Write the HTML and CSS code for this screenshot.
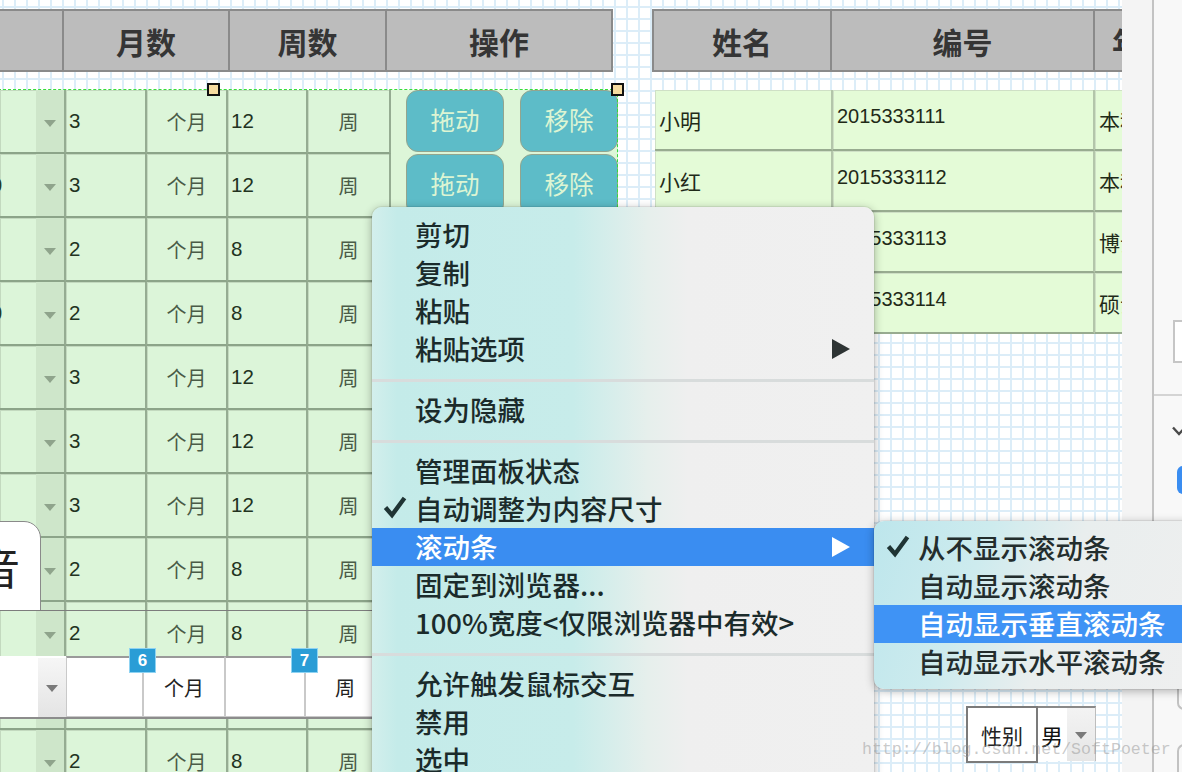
FILE: index.html
```html
<!DOCTYPE html>
<html lang="zh-CN">
<head>
<meta charset="utf-8">
<title>Axure</title>
<link rel="stylesheet" href="styles.css">
</head>
<body>
<div class="app">
  <div class="canvas">
    <div class="thead lhead">
      <div></div><div>月数</div><div>周数</div><div>操作</div>
    </div>
    <div class="thead rhead">
      <div>姓名</div><div>编号</div><div>年级</div>
    </div>

    <div class="ltable">
      <div class="lrow"><div class="c ca"><i class="strip"><b class="arr"></b></i></div><div class="c num">3</div><div class="c unit">个月</div><div class="c num">12</div><div class="c unit">周</div><div class="ops"><span class="btn">拖动</span><span class="btn">移除</span></div></div>
      <div class="lrow"><div class="c ca"><span class="cut">0</span><i class="strip"><b class="arr"></b></i></div><div class="c num">3</div><div class="c unit">个月</div><div class="c num">12</div><div class="c unit">周</div><div class="ops"><span class="btn">拖动</span><span class="btn">移除</span></div></div>
      <div class="lrow"><div class="c ca"><i class="strip"><b class="arr"></b></i></div><div class="c num">2</div><div class="c unit">个月</div><div class="c num">8</div><div class="c unit">周</div><div class="ops"><span class="btn"></span><span class="btn"></span></div></div>
      <div class="lrow"><div class="c ca"><span class="cut">0</span><i class="strip"><b class="arr"></b></i></div><div class="c num">2</div><div class="c unit">个月</div><div class="c num">8</div><div class="c unit">周</div><div class="ops"><span class="btn"></span><span class="btn"></span></div></div>
      <div class="lrow"><div class="c ca"><i class="strip"><b class="arr"></b></i></div><div class="c num">3</div><div class="c unit">个月</div><div class="c num">12</div><div class="c unit">周</div><div class="ops"><span class="btn"></span><span class="btn"></span></div></div>
      <div class="lrow"><div class="c ca"><i class="strip"><b class="arr"></b></i></div><div class="c num">3</div><div class="c unit">个月</div><div class="c num">12</div><div class="c unit">周</div><div class="ops"><span class="btn"></span><span class="btn"></span></div></div>
      <div class="lrow"><div class="c ca"><i class="strip"><b class="arr"></b></i></div><div class="c num">3</div><div class="c unit">个月</div><div class="c num">12</div><div class="c unit">周</div><div class="ops"><span class="btn"></span><span class="btn"></span></div></div>
      <div class="lrow"><div class="c ca"><i class="strip"><b class="arr"></b></i></div><div class="c num">2</div><div class="c unit">个月</div><div class="c num">8</div><div class="c unit">周</div><div class="ops"><span class="btn"></span><span class="btn"></span></div></div>
      <div class="lrow"><div class="c ca"><i class="strip"><b class="arr"></b></i></div><div class="c num">2</div><div class="c unit">个月</div><div class="c num">8</div><div class="c unit">周</div><div class="ops"><span class="btn"></span><span class="btn"></span></div></div>
      <div class="lrow"><div class="c ca"><i class="strip"><b class="arr"></b></i></div><div class="c num"></div><div class="c unit"></div><div class="c num"></div><div class="c unit"></div><div class="ops"><span class="btn"></span><span class="btn"></span></div></div>
      <div class="lrow"><div class="c ca"><i class="strip"><b class="arr"></b></i></div><div class="c num">2</div><div class="c unit">个月</div><div class="c num">8</div><div class="c unit">周</div><div class="ops"><span class="btn"></span><span class="btn"></span></div></div>
    </div>

    <div class="selbox"></div>
    <span class="handle h1"></span>
    <span class="handle h2"></span>

    <div class="rtable">
      <div class="rrow"><div class="rc">小明</div><div class="rc id">2015333111</div><div class="rc">本科</div></div>
      <div class="rrow"><div class="rc">小红</div><div class="rc id">2015333112</div><div class="rc">本科</div></div>
      <div class="rrow"><div class="rc"></div><div class="rc id">2015333113</div><div class="rc">博士</div></div>
      <div class="rrow"><div class="rc"></div><div class="rc id">2015333114</div><div class="rc">硕士</div></div>
    </div>

    <div class="tab">音</div>
    <div class="hline"></div>

    <div class="wrow">
      <div class="wc wa"><i class="wstrip"><b class="warr"></b></i></div>
      <div class="wc"></div>
      <div class="wc wu">个月</div>
      <div class="wc"></div>
      <div class="wc wu">周</div>
    </div>
    <span class="badge b6">6</span>
    <span class="badge b7">7</span>

    <div class="field">
      <div class="flabel">性别</div>
      <div class="fsel"><span>男</span><i class="fstrip"><b class="warr"></b></i></div>
    </div>
  </div>

  <div class="panel">
    <div class="pgut"></div>
    <div class="pdiv"></div>
    <div class="pside">
      <div class="pbox"></div>
      <div class="pline"></div>
      <svg class="pchev" width="14" height="10" viewBox="0 0 14 10"><polyline points="1,1.5 7,8 13,1.5" fill="none" stroke="#4a4a4a" stroke-width="2.4"/></svg>
      <div class="pblue"></div>
      <div class="pround"></div>
      <div class="pround p2"></div>
    </div>
  </div>

  <div class="menu">
    <div class="mi">剪切</div>
    <div class="mi">复制</div>
    <div class="mi">粘贴</div>
    <div class="mi">粘贴选项<svg class="subarr" width="18" height="20" viewBox="0 0 18 20"><polygon points="0,0 18,10 0,20" fill="#2e3434"/></svg></div>
    <div class="sep"></div>
    <div class="mi">设为隐藏</div>
    <div class="sep"></div>
    <div class="mi">管理面板状态</div>
    <div class="mi"><svg class="chk" width="24" height="24" viewBox="0 0 24 24"><polyline points="2.5,12.5 9,20 21.5,3" fill="none" stroke="#1f3434" stroke-width="4.4"/></svg>自动调整为内容尺寸</div>
    <div class="mi hl">滚动条<svg class="subarr" width="18" height="20" viewBox="0 0 18 20"><polygon points="0,0 18,10 0,20" fill="#ffffff"/></svg></div>
    <div class="mi">固定到浏览器...</div>
    <div class="mi">100%宽度&lt;仅限浏览器中有效&gt;</div>
    <div class="sep"></div>
    <div class="mi">允许触发鼠标交互</div>
    <div class="mi">禁用</div>
    <div class="mi">选中</div>
  </div>

  <div class="submenu">
    <div class="mi"><svg class="chk" width="24" height="24" viewBox="0 0 24 24"><polyline points="2.5,12.5 9,20 21.5,3" fill="none" stroke="#1f3434" stroke-width="4.4"/></svg>从不显示滚动条</div>
    <div class="mi">自动显示滚动条</div>
    <div class="mi hl">自动显示垂直滚动条</div>
    <div class="mi">自动显示水平滚动条</div>
  </div>

  <div class="wm">http://blog.csdn.net/SoftPoeter</div>
</div>
</body>
</html>
```

FILE: styles.css
```css
* { box-sizing: border-box; margin: 0; padding: 0; }
html, body { width: 1182px; height: 772px; overflow: hidden; }
body {
  font-family: "Noto Sans CJK SC", "Liberation Sans", sans-serif;
  background: #fff;
  color: #222;
}
.app { position: relative; display: flex; width: 1182px; height: 772px; overflow: hidden; }

/* design canvas with grid */
.canvas {
  position: relative;
  width: 1122px;
  height: 772px;
  flex-shrink: 0;
  overflow: hidden;
  background-color: #fff;
  background-image:
    linear-gradient(to right, #dcedf8 2px, transparent 2px),
    linear-gradient(to bottom, #dcedf8 2px, transparent 2px);
  background-size: 12px 12px;
  background-position: 2px 6px;
}

/* table headers */
.thead {
  position: absolute;
  top: 9px;
  height: 63px;
  display: grid;
  background: #bcbcbc;
  border: 2px solid #8a8a8a;
}
.lhead { left: -2px; grid-template-columns: 64px 166px 157px 224px; }
.rhead { left: 652px; grid-template-columns: 178px 263px 94px; }
.thead div {
  display: flex;
  align-items: center;
  justify-content: center;
  font-size: 30px;
  font-weight: 700;
  color: #353535;
  border-right: 2px solid #8a8a8a;
  overflow: hidden;
  white-space: nowrap;
}
.thead div:last-child { border-right: none; }

/* left table */
.ltable { position: absolute; left: 0; top: 90px; width: 618px; }
.lrow { display: grid; grid-template-columns: 66px 81px 81px 80px 83px 227px; height: 64px; }
.c {
  background: #dcf5d9;
  border-right: 2px solid #95ac92;
  border-bottom: 2px solid #8ca489;
  box-shadow: inset 1px 1px 0 #c3d9bf;
  display: flex;
  align-items: center;
  font-size: 20px;
  overflow: hidden;
}
.ca { justify-content: flex-end; }
.cut { margin-right: auto; margin-left: -9px; font-family: "Liberation Sans", sans-serif; color: #273824; }
.strip {
  width: 28px;
  align-self: stretch;
  background: #cee6ca;
  display: flex;
  align-items: center;
  justify-content: center;
}
.arr {
  width: 0; height: 0;
  border-left: 6px solid transparent;
  border-right: 6px solid transparent;
  border-top: 7px solid #8fa48c;
  margin-top: 4px;
}
.num { padding-left: 3px; font-family: "Liberation Sans", sans-serif; color: #22331f; font-size: 20.5px; }
.unit { justify-content: center; color: #4a5b47; }
.ops { background: #ddf6d8; display: flex; gap: 16px; padding-left: 15px; }
.btn {
  width: 98px;
  height: 62px;
  border-radius: 12px;
  background: #5dbcc8;
  border: 1px solid #93a58e;
  color: #ddf5d3;
  font-size: 24.5px;
  padding-bottom: 3px;
  display: flex;
  align-items: center;
  justify-content: center;
}

/* selection */
.selbox {
  position: absolute;
  left: -2px; top: 89px;
  width: 620px; height: 700px;
  border-top: 1px dashed #37dd37;
  border-right: 1px dashed #37dd37;
  pointer-events: none;
}
.handle {
  position: absolute;
  top: 83px;
  width: 13px; height: 13px;
  background: #f6dca0;
  border: 2px solid #111;
}
.h1 { left: 207px; }
.h2 { left: 611px; }

/* right table */
.rtable { position: absolute; left: 655px; top: 90px; }
.rrow { display: grid; grid-template-columns: 178px 262px 120px; height: 61px; }
.rc {
  background: #e4fbd7;
  border-right: 2px solid #b3c5aa;
  border-bottom: 2px solid #98ab90;
  box-shadow: inset 1px 1px 0 #cfe0c6;
  padding-left: 4px;
  display: flex;
  align-items: center;
  font-size: 21px;
  color: #1f2a18;
  white-space: nowrap;
  overflow: hidden;
}
.rc.id { font-family: "Liberation Sans", sans-serif; font-size: 20px; align-items: flex-start; padding-top: 15px; }

/* misc canvas widgets */
.tab {
  position: absolute;
  left: -60px; top: 521px;
  width: 101px; height: 90px;
  background: #fff;
  border: 1.5px solid #8a8a8a;
  border-radius: 0 17px 0 0;
  display: flex;
  align-items: center;
  justify-content: flex-end;
  padding-right: 20px;
  font-size: 44px;
  color: #222;
  overflow: hidden;
}
.hline { position: absolute; left: 0; top: 610px; width: 372px; height: 1px; background: #7d7d7d; }

.wrow {
  position: absolute;
  left: 0; top: 656px;
  height: 63px;
  display: grid;
  grid-template-columns: 66px 77px 82px 80px 80px;
  border-bottom: 2px solid #8c8c8c;
}
.wc {
  background: #fff;
  border: 1px solid #c9c9c9;
  border-top: 2px solid #9a9a9a;
  display: flex;
  align-items: center;
  font-size: 20px;
  color: #222;
}
.wa { justify-content: flex-end; border: none; border-top: 2px solid #fff; }
.wu { justify-content: center; }
.wstrip {
  width: 28px;
  align-self: stretch;
  background: linear-gradient(#f6f6f6, #e4e4e4);
  display: flex;
  align-items: center;
  justify-content: center;
}
.warr {
  width: 0; height: 0;
  border-left: 6px solid transparent;
  border-right: 6px solid transparent;
  border-top: 7px solid #7a7a7a;
  margin-top: 2px;
}
.badge {
  position: absolute;
  top: 648px;
  width: 27px; height: 25px;
  background: #2a9dd6;
  border: 1px solid #8fd3f2;
  color: #fff;
  font: 700 17px "Liberation Sans", sans-serif;
  display: flex;
  align-items: center;
  justify-content: center;
}
.b6 { left: 129px; }
.b7 { left: 291px; }

.field { position: absolute; left: 966px; top: 706px; display: flex; height: 57px; }
.flabel {
  width: 72px; height: 57px;
  border: 2px solid #7b7b7b;
  background: #fff;
  display: flex;
  align-items: center;
  justify-content: center;
  font-size: 21px;
  color: #222;
}
.fsel {
  width: 58px; height: 55px;
  background: #fff;
  border-top: 2px solid #8a8a8a;
  border-right: 1px solid #bdbdbd;
  display: flex;
  align-items: center;
}
.fsel span { padding-left: 3px; font-size: 22px; flex: 1; color: #111; }
.fstrip {
  width: 28px;
  align-self: stretch;
  background: linear-gradient(#f3f3f3, #e6e6e6);
  display: flex;
  align-items: center;
  justify-content: center;
}

/* right panel */
.panel { width: 60px; height: 772px; display: flex; flex-shrink: 0; }
.pgut { width: 30px; background: #f4f4f4; }
.pdiv { width: 2px; background: #c3c3c3; }
.pside { flex: 1; display: flex; flex-direction: column; background: #f8f8f8; overflow: hidden; }
.pbox { margin: 320px 0 0 19px; width: 20px; height: 43px; border: 2px solid #c6c6c6; border-right: none; background: #fff; flex-shrink: 0; }
.pline { margin-top: 31px; height: 2px; background: #d4d4d4; flex-shrink: 0; }
.pchev { margin: 30px 0 0 18px; flex-shrink: 0; }
.pblue { margin: 30px 0 0 23px; width: 20px; height: 28px; border-radius: 6px 0 0 6px; background: #3a8df1; flex-shrink: 0; }
.pround { margin: 174px 0 0 23px; width: 20px; height: 42px; border: 2px solid #c2c2c2; border-right: none; border-radius: 7px 0 0 7px; flex-shrink: 0; }
.pround.p2 { margin-top: 34px; }

/* context menu */
.menu {
  position: absolute;
  left: 372px; top: 207px;
  width: 502px; height: 600px;
  padding-top: 9px;
  border-radius: 10px 10px 0 0;
  background: linear-gradient(to right, #d3efec 0%, #c4ebe9 5%, #c7ecea 40%, #e6efec 55%, #efefef 63%, #f0f0f0 100%);
  box-shadow: 0 2px 10px rgba(0, 0, 0, 0.32), 0 0 0 1px rgba(0, 0, 0, 0.06);
  z-index: 5;
}
.mi {
  position: relative;
  height: 38px;
  display: flex;
  align-items: center;
  padding-left: 43px;
  padding-bottom: 3px;
  font-size: 27.5px;
  font-weight: 500;
  color: #1b2b2b;
  white-space: nowrap;
}
.mi.hl { background: #3a8df1; color: #fff; }
.chk { position: absolute; left: 11px; top: 5px; }
.subarr { position: absolute; right: 24px; top: 9px; }
.sep { height: 3px; margin: 11px 0 9px; background: #d8dcdc; }

.submenu {
  position: absolute;
  left: 874px; top: 521px;
  width: 330px; height: 168px;
  padding-top: 8px;
  border-radius: 10px 0 0 10px;
  background: linear-gradient(110deg, #bde6ec 0%, #cdebee 30%, #e9eeee 55%, #efefef 100%);
  box-shadow: 0 2px 10px rgba(0, 0, 0, 0.3), 0 0 0 1px rgba(0, 0, 0, 0.06);
  z-index: 6;
}
.submenu .mi { padding-left: 44px; color: #232d2d; }
.submenu .mi.hl { background: #3f93f5; color: #fff; }
.submenu .chk { left: 12px; }

.wm {
  position: absolute;
  left: 862px; top: 740px;
  font-family: "Liberation Mono", monospace;
  font-size: 16.6px;
  color: rgba(150, 150, 150, 0.5);
  white-space: nowrap;
  z-index: 10;
}
```
